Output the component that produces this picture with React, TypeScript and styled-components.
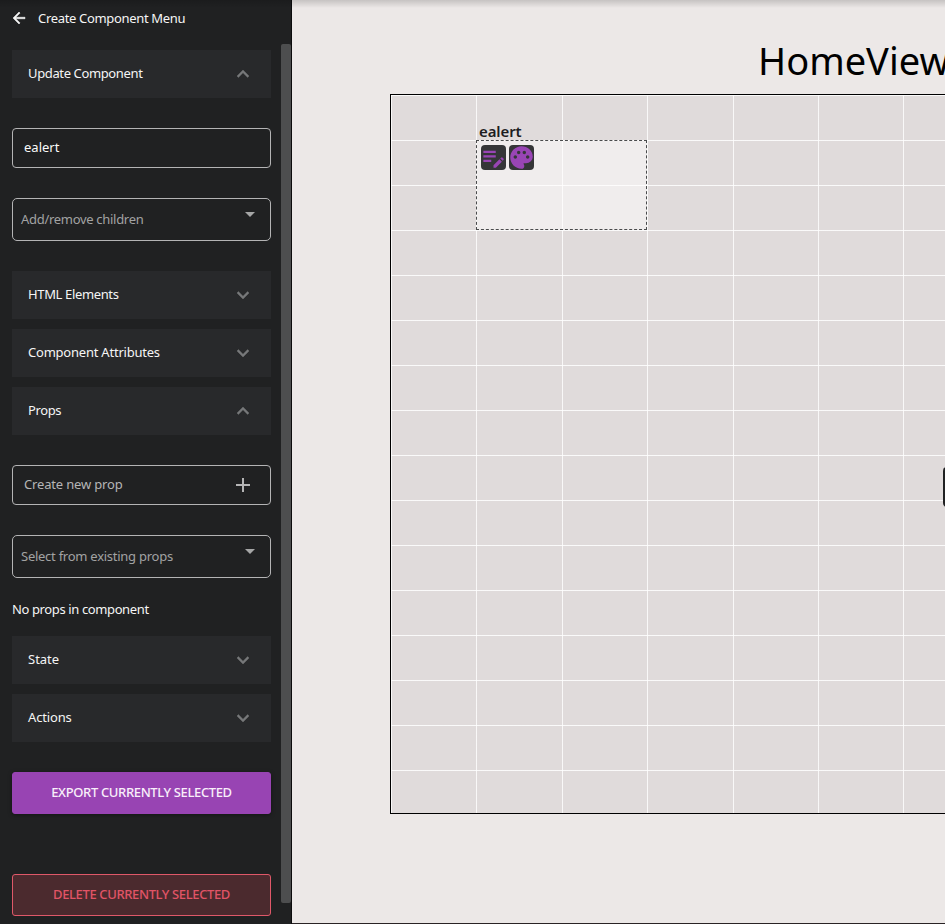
import React from "react";
import styled, { createGlobalStyle } from "styled-components";
import {
  MdAdd,
  MdArrowBack,
  MdArrowDropDown,
  MdEditNote,
  MdExpandLess,
  MdExpandMore,
  MdPalette,
} from "react-icons/md";

const GlobalStyle = createGlobalStyle`
  * { box-sizing: border-box; }
  body {
    margin: 0;
    overflow: hidden;
    background: #ece8e7;
    font-family: "Noto Sans", "Open Sans", sans-serif;
  }
`;

const Page = styled.div`
  display: flex;
  position: relative;
  width: 100%;
  height: 924px;
  overflow: hidden;
`;

const TopShade = styled.div`
  position: absolute;
  inset: 0 0 auto 0;
  height: 8px;
  background: linear-gradient(rgba(0, 0, 0, 0.16), rgba(0, 0, 0, 0));
  pointer-events: none;
`;

const Sidebar = styled.aside`
  flex: none;
  display: flex;
  flex-direction: column;
  width: 292px;
  background: #202122;
  color: #f5f5f5;
  border-right: 1px solid #0c0c0d;
`;

const MenuHeader = styled.header`
  flex: none;
  display: flex;
  align-items: center;
  gap: 10px;
  height: 44px;
  padding: 0 0 8px 10px;

  svg { display: block; }
  svg path:last-child { stroke: currentColor; stroke-width: 0.7; }
`;

const MenuBody = styled.div`
  display: flex;
  flex: 1;
  min-height: 0;
`;

const MenuList = styled.div`
  display: flex;
  flex-direction: column;
  width: 281px;
  padding: 6px 10px 0 12px;
`;

const ScrollTrack = styled.div`
  width: 10px;
`;

const ScrollThumb = styled.div`
  height: 859px;
  border-radius: 2px;
  background: #4d4e4f;
`;

const Text = styled.span<{ $ls?: number }>`
  font-size: 13px;
  line-height: 18px;
  letter-spacing: ${(p) => p.$ls ?? 0}px;
  white-space: nowrap;
`;

const Section = styled.div<{ $gap?: number }>`
  flex: none;
  display: flex;
  align-items: center;
  justify-content: space-between;
  height: 48px;
  margin-bottom: ${(p) => p.$gap ?? 10}px;
  padding: 0 16px 0 16px;
  background: #28292b;

  ${Text} { margin-bottom: 2px; }
  svg { color: #77787a; }
  svg path:last-child { stroke: currentColor; stroke-width: 0.4; }
`;

const Field = styled.div<{ $select?: boolean; $active?: boolean }>`
  flex: none;
  display: flex;
  align-items: center;
  justify-content: space-between;
  height: ${(p) => (p.$select ? 43 : 40)}px;
  margin-bottom: 30px;
  padding: 0 ${(p) => (p.$select ? 8 : 15)}px 0 ${(p) => (p.$select ? 8 : 11)}px;
  border: 1px solid #b4b4b5;
  border-radius: ${(p) => (p.$select ? 5 : 4)}px;
  color: ${(p) => (p.$active ? "#fafafa" : p.$select ? "#a2a3a3" : "#b5b5b6")};

  ${Text} { margin-bottom: ${(p) => (p.$select ? 1 : 2)}px; }
`;

const DropArrow = styled(MdArrowDropDown)`
  margin-bottom: 11px;
  color: #a5a6a6;
`;

const Note = styled.div`
  display: flex;
  align-items: center;
  height: 18px;
  margin: -8px 0 18px;
`;

const Button = styled.button<{ $danger?: boolean }>`
  flex: none;
  display: flex;
  align-items: center;
  justify-content: center;
  height: 42px;
  margin: 0 0 60px;
  padding: 0 0 2px;
  border: 1px solid ${(p) => (p.$danger ? "#df5869" : "#9844b3")};
  border-radius: 3px;
  background: ${(p) => (p.$danger ? "#4b2a2e" : "#9844b3")};
  color: ${(p) => (p.$danger ? "#e15466" : "#f8effa")};
  box-shadow: ${(p) => (p.$danger ? "none" : "0 1px 4px rgba(0, 0, 0, 0.4)")};
  font-family: inherit;
  font-weight: 500;
`;

const Workspace = styled.main`
  flex: 1;
  min-width: 0;
  overflow: hidden;
  background: #ece8e7;
  border-bottom: 1px solid #292325;
`;

const Title = styled.h1`
  height: 94px;
  margin: 0;
  padding: 35px 0 0 466px;
  color: #000;
  font-size: 38px;
  font-weight: 400;
  line-height: 50px;
  white-space: nowrap;
`;

const Canvas = styled.div`
  position: relative;
  width: 1026px;
  height: 720px;
  margin-left: 98px;
  border: 1px solid #000;
  background:
    repeating-linear-gradient(to bottom, rgba(255, 255, 255, 0.85) 0 1px, transparent 1px 45px),
    repeating-linear-gradient(to right, rgba(255, 255, 255, 0.8) 0 1px, transparent 1px 85.4px),
    #e0dbdb;
`;

const Node = styled.div`
  position: absolute;
  left: 85px;
  top: 45px;
  width: 170.5px;
  height: 90px;
  border: 1px dashed #4a4b4c;
  background: rgba(255, 253, 253, 0.52);
`;

const NodeName = styled.div`
  position: absolute;
  left: 2px;
  top: -20px;
  color: #1d1d1f;
  font-size: 15px;
  font-weight: 600;
  line-height: 20px;
  letter-spacing: -0.1px;
`;

const NodeTools = styled.div`
  display: flex;
  gap: 3px;
  padding: 4px;
`;

const Tool = styled.div`
  display: flex;
  align-items: center;
  justify-content: center;
  width: 25px;
  height: 25px;
  border-radius: 4px;
  background: #353638;
  color: #9945b5;

  svg { flex: none; }
`;

const DrawerHandle = styled.div`
  position: absolute;
  left: 943px;
  top: 467px;
  width: 20px;
  height: 40px;
  border-radius: 4px;
  background: #202122;
`;

type PanelProps = { label: string; ls?: number; open?: boolean; gap?: number };

const Panel = ({ label, ls, open, gap }: PanelProps) => (
  <Section $gap={gap}>
    <Text $ls={ls}>{label}</Text>
    {open ? <MdExpandLess size={24} /> : <MdExpandMore size={24} />}
  </Section>
);

export default function App() {
  return (
    <>
      <GlobalStyle />
      <Page>
        <Sidebar>
          <MenuHeader>
            <MdArrowBack size={18} />
            <Text $ls={-0.33}>Create Component Menu</Text>
          </MenuHeader>
          <MenuBody>
            <MenuList>
              <Panel label="Update Component" ls={-0.37} open gap={30} />
              <Field $active>
                <Text>ealert</Text>
              </Field>
              <Field $select>
                <Text $ls={-0.3}>Add/remove children</Text>
                <DropArrow size={24} />
              </Field>
              <Panel label="HTML Elements" ls={-0.36} />
              <Panel label="Component Attributes" ls={-0.22} />
              <Panel label="Props" ls={-0.4} open gap={30} />
              <Field>
                <Text $ls={-0.17}>Create new prop</Text>
                <MdAdd size={24} />
              </Field>
              <Field $select>
                <Text $ls={-0.26}>Select from existing props</Text>
                <DropArrow size={24} />
              </Field>
              <Note>
                <Text $ls={-0.38}>No props in component</Text>
              </Note>
              <Panel label="State" />
              <Panel label="Actions" ls={-0.15} gap={30} />
              <Button>
                <Text $ls={-0.36}>EXPORT CURRENTLY SELECTED</Text>
              </Button>
              <Button $danger>
                <Text $ls={-0.37}>DELETE CURRENTLY SELECTED</Text>
              </Button>
            </MenuList>
            <ScrollTrack>
              <ScrollThumb />
            </ScrollTrack>
          </MenuBody>
        </Sidebar>
        <Workspace>
          <Title>HomeView</Title>
          <Canvas>
            <Node>
              <NodeName>ealert</NodeName>
              <NodeTools>
                <Tool><MdEditNote size={27} /></Tool>
                <Tool><MdPalette size={27} /></Tool>
              </NodeTools>
            </Node>
          </Canvas>
        </Workspace>
        <DrawerHandle />
        <TopShade />
      </Page>
    </>
  );
}
